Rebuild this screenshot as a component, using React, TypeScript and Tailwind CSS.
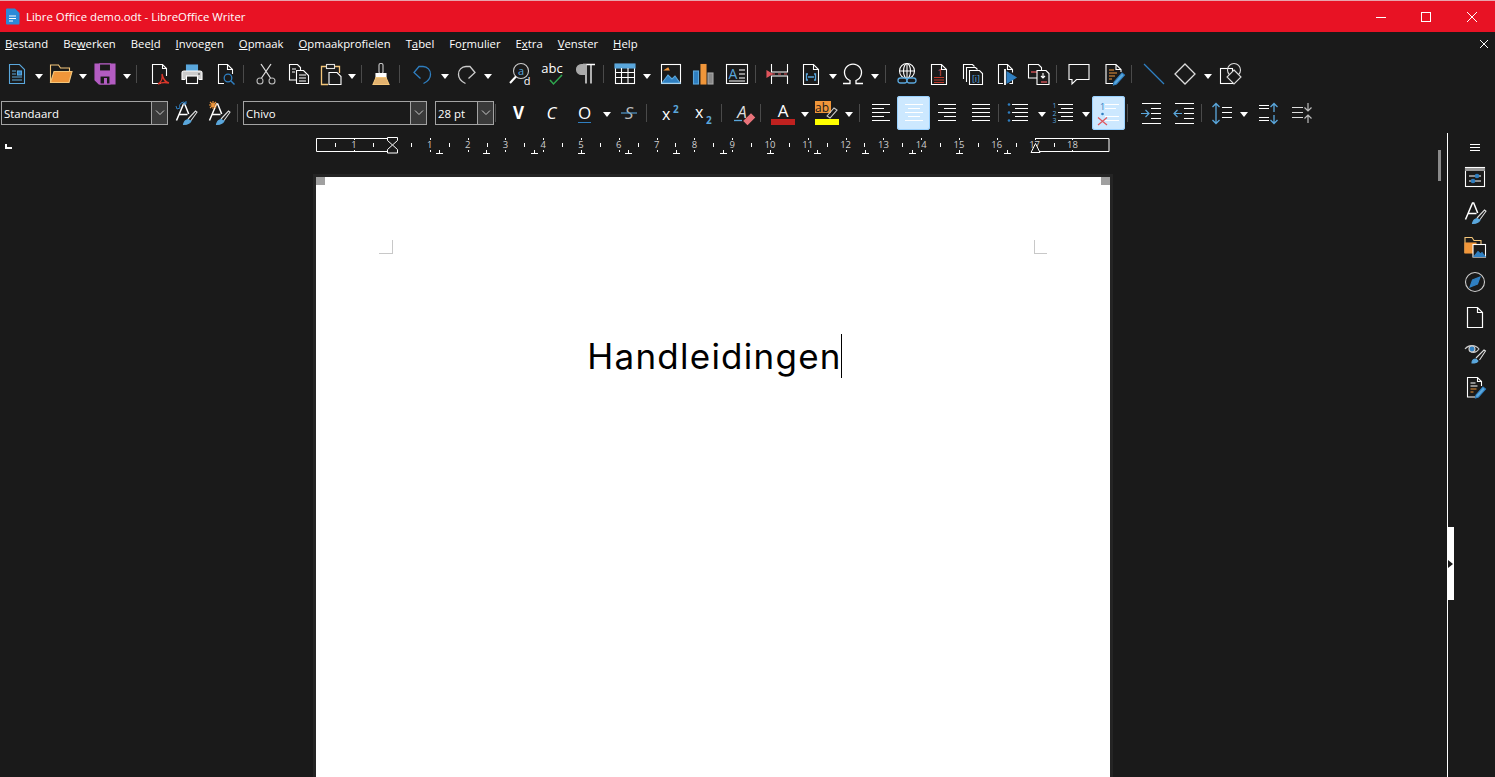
import type { ReactNode } from 'react'

const BLUE = '#2f7fc1'
const LBLUE = '#5aa7dc'
const ORANGE = '#f0963a'
const GRAY = '#b8b8b8'

function Ico({ children }: { children: ReactNode }) {
  return (
    <svg width="24" height="24" viewBox="0 0 24 24" fill="none" stroke="#fff" strokeWidth="1.1" className="overflow-visible">
      {children}
    </svg>
  )
}

// toolbar slot, 33px wide
function B({ children, on, className = '' }: { children: ReactNode; on?: boolean; className?: string }) {
  return (
    <div
      className={`flex h-[34px] w-[33px] shrink-0 items-center justify-center rounded-[3px] ${
        on ? 'bg-[#cce8ff] shadow-[inset_0_0_0_1px_#99d1ff]' : ''
      } ${className}`}
    >
      {children}
    </div>
  )
}

function D({ className = '' }: { className?: string }) {
  return (
    <div className={`flex h-[34px] w-[11px] shrink-0 items-center justify-center pt-1 ${className}`}>
      <div className="h-0 w-0 border-x-[4px] border-t-[5px] border-x-transparent border-t-white" />
    </div>
  )
}

function S({ className = '' }: { className?: string }) {
  return (
    <div className={`flex h-[34px] w-[8px] shrink-0 items-center pl-[2px] ${className}`}>
      <div className="h-[18px] w-px bg-[#4a4a4a]" />
    </div>
  )
}

function Combo({ text, className }: { text: string; className: string }) {
  return (
    <div className={`flex h-[24px] shrink-0 items-stretch border border-[#a3a3a3] bg-[#1a1a1a] ${className}`}>
      <span className="flex-1 truncate pl-[2px] text-[11.4px] leading-[24px] text-white">{text}</span>
      <div className="flex w-[16px] items-center justify-center border-l border-[#a3a3a3] bg-[#3a3a3a]">
        <svg width="10" height="6" viewBox="0 0 10 6" fill="none" stroke="#c8c8c8">
          <path d="M1 .5l4 4 4-4" />
        </svg>
      </div>
    </div>
  )
}

const menu: [string, string, string][] = [
  ['', 'B', 'estand'],
  ['Be', 'w', 'erken'],
  ['Bee', 'l', 'd'],
  ['', 'I', 'nvoegen'],
  ['', 'O', 'pmaak'],
  ['', 'O', 'pmaakprofielen'],
  ['T', 'a', 'bel'],
  ['Fo', 'r', 'mulier'],
  ['E', 'x', 'tra'],
  ['', 'V', 'enster'],
  ['', 'H', 'elp'],
]

function StyleA() {
  return (
    <>
      <path d="M2.500 19.500L9.500 3h1.200l4 10M5.500 13.500h8" strokeWidth="1.500" />
      <path d="M14 18l7.500-8 1.500 1.200-6 8.300" stroke="#ddd" />
      <path d="M9.500 23.500c.5-3 2-4.500 4.500-5l3 1.500c-1.500 3-4 3.500-7.500 3.500z" fill={LBLUE} stroke={LBLUE} />
    </>
  )
}

function Ruler() {
  const step = 37.8
  const nums = Array.from({ length: 19 }, (_, i) => i)
  const tabs = Array.from({ length: 13 }, (_, i) => 439 + i * 47.3)
  return (
    <svg width="800" height="22" viewBox="314 133 800 22" fill="none" stroke="#fff" className="shrink-0">
      <path d="M392 138.500H316.500v13H392M1035 138.500h74v13H1035" />
      {nums.map((n) => {
        const x = 392 + n * step
        return (
          <g key={n}>
            {n > 0 && (
              <text x={x} y={147.5} textAnchor="middle" fontSize="9.5" fill="#cfcfcf" stroke="none" fontFamily="'Open Sans', sans-serif">
                {n}
              </text>
            )}
            <path d={`M${Math.round(x) + 0.5} 138v2M${Math.round(x) + 0.5} 150v2`} />
            {n < 18 && <path d={`M${Math.round(x + step / 2) + 0.5} 143v4`} />}
          </g>
        )
      })}
      <text x={354} y={147.5} textAnchor="middle" fontSize="9.5" fill="#cfcfcf" stroke="none" fontFamily="'Open Sans', sans-serif">
        1
      </text>
      <path d="M354.500 138v2M354.500 150v2M335.500 143v4M373.500 143v4" />
      {tabs.map((x) => (
        <path key={x} d={`M${Math.round(x) + 0.5} 150v3M${Math.round(x) - 3} 153.500h7`} />
      ))}
      <path d="M387.500 137.500h10v3l-5 4.500-5-4.500zM392.500 145l5 4.500v3.500h-10v-3.500z" fill="#1a1a1a" />
      <path d="M1031 152.500l4.500-9 4.500 9z" fill="#1a1a1a" />
    </svg>
  )
}

const sideIcons: ReactNode[] = [
  <>
    <rect x="2.500" y="2.500" width="19" height="19" />
    <path d="M2 4.500h20" stroke="#999" strokeWidth="3" />
    <path d="M6 11h12M6 16h12" />
    <circle cx="14" cy="11" r="1.700" fill={BLUE} stroke={BLUE} />
    <circle cx="10" cy="16" r="1.700" fill={BLUE} stroke={BLUE} />
  </>,
  <StyleA />,
  <>
    <path d="M2 18V2.500h7l2 3h7V9" stroke="#f4c67a" />
    <rect x="2" y="8" width="11" height="10" fill={ORANGE} stroke={ORANGE} />
    <rect x="10" y="9.500" width="12.500" height="12.500" fill="#1a1a1a" stroke="#fff" />
    <path d="M11 21.500l4-5 2.500 2.500 1.500-1.500 3 4z" fill={BLUE} stroke={BLUE} />
  </>,
  <>
    <circle cx="12" cy="12" r="9.500" stroke="#ccc" />
    <path d="M17 7l-2.500 7L7 17l2.500-7z" fill={BLUE} stroke={BLUE} />
  </>,
  <path d="M4.500 2.500h10l5 5v15h-15zM14.500 2.500v5h5" strokeWidth="1.200" />,
  <>
    <path d="M2 9c3-4 10-5 14 0-2 3-5 4-8 3" stroke="#ccc" />
    <circle cx="9" cy="9" r="3" fill={BLUE} stroke="#ccc" />
    <path d="M13 18l8-8 1.500 1-6 9" stroke="#ddd" />
    <path d="M9 23c0-3 2-4 4-4l2 2c-1 2-3 2-6 2z" fill={LBLUE} stroke={LBLUE} />
  </>,
  <>
    <path d="M12 22H4.500V2.500h10l4 4V11M14.500 2.500v4h4" />
    <path d="M7.500 8h5M7.500 11h7" stroke="#fff" />
    <path d="M7.500 14h6M7.500 17h3" stroke={ORANGE} />
    <path d="M13 20l7-8 2.500 2-7 8-3 1z" fill={LBLUE} stroke={BLUE} />
  </>,
]

export default function App() {
  return (
    <div className="flex h-[777px] w-[1495px] flex-col overflow-hidden bg-[#1a1a1a] font-['Open_Sans',sans-serif] text-white">
      {/* title bar */}
      <div className="flex h-[32px] shrink-0 items-center border-t border-[#e7a4ac] bg-[#e81224] pl-[5px]">
        <svg width="15" height="17" viewBox="0 0 15 17">
          <path d="M1 1.500A1 1 0 012 .5h8l4.500 4.500v10.500a1 1 0 01-1 1H2a1 1 0 01-1-1z" fill="#2b8ad8" />
          <path d="M4 8h7M4 10.500h7M4 13h4" stroke="#fff" />
        </svg>
        <span className="ml-[6px] text-[11.4px] text-white">Libre Office demo.odt - LibreOffice Writer</span>
        <div className="ml-auto flex items-center">
          <div className="flex w-[45px] justify-center">
            <svg width="12" height="12" stroke="#fff"><path d="M1 6.500h10" /></svg>
          </div>
          <div className="flex w-[46px] justify-center">
            <svg width="12" height="12" fill="none" stroke="#fff"><rect x="1.500" y="1.500" width="9" height="9" /></svg>
          </div>
          <div className="flex w-[46px] justify-center">
            <svg width="12" height="12" stroke="#fff"><path d="M1 1l10 10M11 1L1 11" /></svg>
          </div>
        </div>
      </div>

      {/* menu bar */}
      <div className="flex h-[24px] shrink-0 items-center gap-[15px] pl-[5px] pr-[6px] text-[11.3px]">
        {menu.map(([a, u, b]) => (
          <span key={a + u + b}>
            {a}
            <span className="underline">{u}</span>
            {b}
          </span>
        ))}
        <svg className="ml-auto" width="10" height="10" stroke="#fff"><path d="M1 1l8 8M9 1L1 9" /></svg>
      </div>

      {/* standard toolbar */}
      <div className="flex h-[36px] shrink-0 items-center">
        <B>
          <Ico>
            <path d="M4.500 2.500h10l5 5v14h-15z" stroke={LBLUE} />
            <path d="M7 9h4M7 12h4M7 15h10M7 18h10" stroke={LBLUE} />
            <rect x="12.500" y="9" width="4" height="4" fill={BLUE} stroke={LBLUE} />
          </Ico>
        </B>
        <D />
        <B>
          <Ico>
            <path d="M1.500 20V3h8l2 3h9v4" stroke="#f4c67a" />
            <path d="M1.500 20.500L5 9.500h18l-3 11z" fill={ORANGE} stroke="#f4c67a" />
          </Ico>
        </B>
        <D />
        <B>
          <Ico>
            <path d="M2 2h20v20H6l-4-4z" fill="#b35cc2" stroke="#b35cc2" />
            <rect x="6.500" y="2" width="11" height="7" fill="#1a1a1a" stroke="#b35cc2" />
            <rect x="7" y="14" width="10" height="8" fill="#1a1a1a" stroke="#b35cc2" />
            <rect x="11" y="16" width="3" height="6" fill="#b35cc2" stroke="none" />
          </Ico>
        </B>
        <D />
        <S className="ml-[2px]" />
        <B>
          <Ico>
            <path d="M14 21.500H5.500v-19h10l4 4V14M15.500 2.500v4h4" />
            <path d="M15 12c1 5-1 8-4 10 4-2 7-2 11-1-4-1-6-4-7-9z" stroke="#d8362a" strokeWidth="1.400" />
          </Ico>
        </B>
        <B>
          <Ico>
            <rect x="6.500" y="3" width="11" height="6" fill={LBLUE} stroke={LBLUE} />
            <path d="M5 17.500H2V11a2 2 0 012-2h16a2 2 0 012 2v6.500h-3" fill="#ccc" stroke="#fff" />
            <rect x="6.500" y="14" width="11" height="7.500" fill="#1a1a1a" />
            <path d="M18 12h2" stroke="#333" />
          </Ico>
        </B>
        <B>
          <Ico>
            <path d="M11 21.500H5.500v-19h9l5 5V12M14.500 2.500v5h5" />
            <circle cx="15" cy="16" r="3.800" stroke={BLUE} strokeWidth="1.300" />
            <path d="M18 19l3.500 3.500" stroke={BLUE} strokeWidth="1.400" />
          </Ico>
        </B>
        <S />
        <B>
          <Ico>
            <path d="M7 2l9.500 14M17 2L7.500 16" stroke="#ddd" strokeWidth="1.300" />
            <circle cx="6" cy="19" r="3" stroke={GRAY} />
            <circle cx="18" cy="19" r="3" stroke={GRAY} />
          </Ico>
        </B>
        <B>
          <Ico>
            <path d="M9 18H2.500V2.500h8l3 3V8" />
            <path d="M5 7h4M5 10h3" />
            <path d="M9.500 8.500h7l5 5v8h-12z" fill="#1a1a1a" />
            <path d="M12 13h7M12 16h7M12 19h7" />
          </Ico>
        </B>
        <B className="-ml-[1px]">
          <Ico>
            <path d="M7 4.500H2.500v18H9" stroke="#f4c67a" strokeWidth="1.300" />
            <path d="M16 4.500h4.500V11" stroke="#f4c67a" strokeWidth="1.300" />
            <rect x="7.500" y="2.500" width="8" height="4" stroke="#ddd" />
            <path d="M10 10.500h8l4 4v8H10z" fill="#1a1a1a" />
          </Ico>
        </B>
        <D className="-ml-[1px]" />
        <S className="ml-[2px]" />
        <B className="-ml-[3px]">
          <Ico>
            <rect x="10" y="1.500" width="4" height="10" rx="1.500" fill="#1a1a1a" stroke="#ccc" />
            <path d="M7 11.500h10v4H7z" fill="#fff" />
            <path d="M7 15.500L4 22.500h16l-3-7z" fill="#e3b26e" stroke="#f4c67a" />
          </Ico>
        </B>
        <S />
        <B className="ml-[1px]">
          <Ico>
            <path d="M9.500 16.500L3 10.500l5-6h4a7.500 7.500 0 017.500 8c0 4-3 7-7 9" stroke={BLUE} strokeWidth="1.300" />
          </Ico>
        </B>
        <D />
        <B className="-ml-[1px]">
          <Ico>
            <path d="M14.500 16.500l6.500-6-5-6h-4a7.500 7.500 0 00-7.500 8c0 4 3 7 7 9" stroke="#ccc" strokeWidth="1.300" />
          </Ico>
        </B>
        <D />
        <B className="ml-[10px]">
          <Ico>
            <circle cx="13" cy="9" r="7.500" stroke="#ccc" />
            <path d="M8 14.500L2 21" strokeWidth="2" />
            <text x="13" y="13" textAnchor="middle" fontSize="11" fill={LBLUE} stroke="none">a</text>
            <text x="19" y="23" textAnchor="middle" fontSize="11" fill="#fff" stroke="none">d</text>
          </Ico>
        </B>
        <B className="-ml-[1px]">
          <Ico>
            <text x="12" y="11" textAnchor="middle" fontSize="13" fill="#fff" stroke="none">abc</text>
            <path d="M10 18l3.500 4L22 13" stroke="#2fa84f" strokeWidth="1.500" />
          </Ico>
        </B>
        <B>
          <Ico>
            <path d="M13 2.500v19M18 2.500v19M10 2.500h12" strokeWidth="1.300" />
            <path d="M13 2.500H8.500a4.500 4.500 0 000 10H13z" fill="#aaa" stroke="#aaa" />
          </Ico>
        </B>
        <S />
        <B className="-ml-[1px]">
          <Ico>
            <rect x="2.500" y="2.500" width="19" height="19" />
            <rect x="2" y="2" width="20" height="4" fill={LBLUE} stroke={LBLUE} />
            <path d="M2.500 10.500h19M2.500 15.500h19M8.500 6v15.500M15 6v15.500" />
          </Ico>
        </B>
        <D />
        <B className="ml-[2px]">
          <Ico>
            <rect x="2.500" y="2.500" width="19" height="19" />
            <path d="M3 21l6-8 4 4 3-3 5 7z" fill={BLUE} stroke={LBLUE} />
            <path d="M6 8l3-2 1 2z" fill={ORANGE} stroke={ORANGE} />
          </Ico>
        </B>
        <B className="-ml-[1px]">
          <Ico>
            <rect x="2.500" y="9" width="5" height="13" fill={BLUE} stroke={LBLUE} />
            <rect x="10" y="2.500" width="5" height="19.500" fill={ORANGE} stroke={ORANGE} />
            <rect x="17" y="11" width="5" height="11" fill="#888" stroke="#aaa" />
          </Ico>
        </B>
        <B className="ml-[1px]">
          <Ico>
            <rect x="1.500" y="2.500" width="21" height="19" />
            <text x="8" y="17" textAnchor="middle" fontSize="14" fill={LBLUE} stroke="none">A</text>
            <path d="M14 8h6M14 12h6M14 16h6M4 19h16" />
          </Ico>
        </B>
        <S />
        <B>
          <Ico>
            <path d="M5.500 2v8h16V2M5.500 22v-8h16v8" />
            <path d="M6 12h3M12 12h3M18 12h3" stroke="#e0555c" />
            <path d="M1 9l5 3-5 3z" fill="#e0555c" stroke="#e0555c" />
          </Ico>
        </B>
        <B>
          <Ico>
            <path d="M4.500 2.500h10l5 5v15h-15zM14.500 2.500v5h5" />
            <path d="M9 12H7.500v6H9M15 12h1.500v6H15M9 15h6" stroke={LBLUE} strokeWidth="1.300" />
          </Ico>
        </B>
        <D />
        <B className="-ml-[2px]">
          <Ico>
            <path d="M2 21.500h7v-3a8.500 8.500 0 116 0v3h7" strokeWidth="1.300" />
          </Ico>
        </B>
        <D />
        <S className="ml-[3px]" />
        <B className="-ml-[1px]">
          <Ico>
            <circle cx="12" cy="9" r="7.500" />
            <ellipse cx="12" cy="9" rx="3.500" ry="7.500" />
            <path d="M4.500 9h15M12 1.500v15" />
            <rect x="3" y="16" width="9" height="5" rx="2.500" fill="#1a1a1a" stroke={LBLUE} strokeWidth="1.300" />
            <rect x="12" y="16" width="9" height="5" rx="2.500" fill="#1a1a1a" stroke={LBLUE} strokeWidth="1.300" />
          </Ico>
        </B>
        <B className="-ml-[1px]">
          <Ico>
            <path d="M4.500 2.500h10l5 5v15h-15zM14.500 2.500v5h5" />
            <text x="13" y="14" textAnchor="middle" fontSize="9" fill="#e0555c" stroke="none">1</text>
            <path d="M7 15.500h10M7 18h10M7 20.500h10" stroke="#c0392b" />
          </Ico>
        </B>
        <B className="ml-[1px]">
          <Ico>
            <path d="M2.500 17V2.500h9l2 2M5.500 20V5.500h9l2 2" />
            <path d="M8.500 22.500v-14h10l3 3v11z" />
            <text x="15" y="20" textAnchor="middle" fontSize="9" fill={LBLUE} stroke="none">[i]</text>
          </Ico>
        </B>
        <B>
          <Ico>
            <path d="M9 21.500H4.500v-19h9l5 5v3M13.500 2.500v5h5M18.500 18v3.500h-3" />
            <path d="M11 7v16" strokeWidth="1.800" />
            <path d="M13 10l9 5.500-9 5.500z" fill={BLUE} stroke={BLUE} />
          </Ico>
        </B>
        <B>
          <Ico>
            <path d="M11 16H1.500V2.500h10l3 3V8" />
            <path d="M4 10h6" stroke="#e0555c" strokeWidth="1.300" />
            <path d="M10 8.500h9l3 3v11H10z" fill="#1a1a1a" />
            <path d="M14 20h6" stroke="#e0555c" strokeWidth="1.300" />
            <path d="M16 11v5M14 14l2 2 2-2" />
          </Ico>
        </B>
        <S className="-ml-[1px]" />
        <B>
          <Ico>
            <path d="M2 2.500h20v15H9.500L5 22v-4.500H2z" />
          </Ico>
        </B>
        <B className="ml-[2px]">
          <Ico>
            <path d="M11 21.500H4V2.500h10l5 5V10M14 2.500v5h5" />
            <path d="M7 8h5M7 11h8M7 14h6M7 17h3" stroke={ORANGE} />
            <path d="M12 20l8-9 2.500 2-8 9-3 1z" fill={LBLUE} stroke={BLUE} />
          </Ico>
        </B>
        <S className="-ml-[1px]" />
        <B>
          <Ico>
            <path d="M2 2l20 20" stroke={BLUE} strokeWidth="1.300" />
          </Ico>
        </B>
        <B className="-ml-[2px]">
          <Ico>
            <path d="M12 2l10 10-10 10L2 12z" stroke="#ddd" strokeWidth="1.300" />
          </Ico>
        </B>
        <D className="ml-[1px]" />
        <B className="ml-[1px]">
          <Ico>
            <rect x="1.500" y="6.500" width="12" height="15" />
            <circle cx="15" cy="8" r="6.500" stroke="#ddd" />
            <path d="M15 8l7 7-7 7-7-7z" fill="#1a1a1a" stroke="#ddd" />
          </Ico>
        </B>
      </div>

      {/* formatting toolbar */}
      <div className="flex h-[41px] shrink-0 items-center pl-[1px]">
        <Combo text="Standaard" className="w-[167px]" />
        <B className="ml-[1px]">
          <Ico>
            <StyleA />
            <path d="M7 8a4 4 0 016-5M13 1v3h-3M3 6l1 3 3-1" stroke={BLUE} strokeWidth="1" transform="translate(-1 -1)" />
          </Ico>
        </B>
        <B>
          <Ico>
            <StyleA />
            <path d="M6 0v8M2 4h8M3 1l6 6M9 1L3 7" stroke={ORANGE} />
          </Ico>
        </B>
        <S />
        <Combo text="Chivo" className="w-[184px]" />
        <Combo text="28 pt" className="ml-[8px] w-[59px]" />
        <S className="-ml-[1px]" />
        <B className="ml-[1px]">
          <span className="text-[17px] font-bold leading-none">V</span>
        </B>
        <B>
          <span className="text-[17px] italic leading-none">C</span>
        </B>
        <B>
          <span className="border-b-[1.500px] border-[#2f7fc1] text-[17px] leading-[19px]">O</span>
        </B>
        <D />
        <B>
          <Ico>
            <text x="12" y="18" textAnchor="middle" fontSize="17" fontStyle="italic" fill="#bbb" stroke="none">S</text>
            <path d="M4 12h16" stroke={LBLUE} />
          </Ico>
        </B>
        <S className="-ml-[1px]" />
        <B className="ml-[3px]">
          <Ico>
            <text x="2" y="19" fontSize="16" fill="#fff" stroke="none">x</text>
            <text x="13" y="12" fontSize="10" fontWeight="700" fill={LBLUE} stroke="none">2</text>
          </Ico>
        </B>
        <B>
          <Ico>
            <text x="2" y="17" fontSize="16" fill="#fff" stroke="none">x</text>
            <text x="13" y="23" fontSize="10" fontWeight="700" fill={LBLUE} stroke="none">2</text>
          </Ico>
        </B>
        <S className="-ml-[2px]" />
        <B>
          <Ico>
            <text x="10" y="17" textAnchor="middle" fontSize="17" fontStyle="italic" fill="#ddd" stroke="none">A</text>
            <path d="M2 19.500h8" stroke={LBLUE} strokeWidth="1.300" />
            <path d="M12 20l7-7 3.500 3.500-7 7z" fill="#e8737a" stroke="#e8737a" />
          </Ico>
        </B>
        <S className="-ml-[2px]" />
        <B>
          <Ico>
            <text x="12" y="16" textAnchor="middle" fontSize="17" fill="#fff" stroke="none">A</text>
            <rect x="0" y="18" width="24" height="6" fill="#c0211f" stroke="none" />
          </Ico>
        </B>
        <D />
        <B>
          <Ico>
            <rect x="0" y="0" width="16" height="12" fill={ORANGE} stroke="none" />
            <text x="7" y="11" textAnchor="middle" fontSize="12" fill="#1a1a1a" stroke="none">ab</text>
            <path d="M12 15l7-8 3 2-7 8z" stroke="#ccc" />
            <rect x="0" y="18" width="24" height="6" fill="#ffff00" stroke="none" />
          </Ico>
        </B>
        <D />
        <S className="ml-[3px]" />
        <B className="-ml-[1px]">
          <Ico>
            <path d="M3 3.500h18M3 7.500h12M3 11.500h18M3 15.500h12M3 19.500h18" />
          </Ico>
        </B>
        <B on>
          <Ico>
            <path d="M3 3.500h18M6 7.500h12M3 11.500h18M6 15.500h12M3 19.500h18" />
          </Ico>
        </B>
        <B>
          <Ico>
            <path d="M3 3.500h18M9 7.500h12M3 11.500h18M9 15.500h12M3 19.500h18" />
          </Ico>
        </B>
        <B className="ml-[1px]">
          <Ico>
            <path d="M3 3.500h18M3 7.500h18M3 11.500h18M3 15.500h18M3 19.500h18" />
          </Ico>
        </B>
        <S className="-ml-[1px]" />
        <B className="-ml-[3px]">
          <Ico>
            <path d="M6 3.500h16M9 7.500h13M6 11.500h16M9 15.500h13M6 19.500h16" />
            <circle cx="3" cy="3.500" r="1.300" fill={BLUE} stroke="none" />
            <circle cx="3" cy="11.500" r="1.300" fill={BLUE} stroke="none" />
            <circle cx="3" cy="19.500" r="1.300" fill={BLUE} stroke="none" />
          </Ico>
        </B>
        <D className="ml-[2px]" />
        <B className="-ml-[1px]">
          <Ico>
            <path d="M7 3.500h15M10 7.500h12M7 11.500h15M10 15.500h12M7 19.500h15" />
            <text x="1.500" y="7" fontSize="7" fill={LBLUE} stroke="none">1</text>
            <text x="1.500" y="14.500" fontSize="7" fill={LBLUE} stroke="none">2</text>
            <text x="1.500" y="22" fontSize="7" fill={LBLUE} stroke="none">3</text>
          </Ico>
        </B>
        <D className="ml-[1px]" />
        <B on className="ml-[1px]">
          <Ico>
            <path d="M8 3.500h14M8 7.500h11M8 15.500h14M8 19.500h14" />
            <text x="3" y="9" fontSize="9" fill={BLUE} stroke="none">1</text>
            <circle cx="5.500" cy="13" r="1.300" fill={BLUE} stroke="none" />
            <path d="M1 16.500l9 7.500M10 16.500L1 24" stroke="#e0555c" strokeWidth="1.200" />
          </Ico>
        </B>
        <S />
        <B className="ml-[1px]">
          <Ico>
            <path d="M3 2.500h19M12 7.500h10M12 12.500h10M12 17.500h10M3 22.500h19" />
            <path d="M2 12.500h8M6.500 9l3.500 3.500L6.500 16" stroke={LBLUE} strokeWidth="1.200" />
          </Ico>
        </B>
        <B>
          <Ico>
            <path d="M3 2.500h19M12 7.500h10M12 12.500h10M12 17.500h10M3 22.500h19" />
            <path d="M10 12.500H2M5.500 9L2 12.500 5.500 16" stroke={LBLUE} strokeWidth="1.200" />
          </Ico>
        </B>
        <S className="-ml-[1px]" />
        <B className="-ml-[2px]">
          <Ico>
            <path d="M12 6.500h10M12 11.500h10M12 16.500h10" />
            <path d="M6 3v19M2.500 6L6 2.500 9.500 6M2.500 19L6 22.500 9.500 19" stroke={LBLUE} strokeWidth="1.300" />
          </Ico>
        </B>
        <D />
        <B className="ml-[3px]">
          <Ico>
            <path d="M2 4.500h10M2 7.500h10M2 16.500h10M2 19.500h10" />
            <path d="M17 11V3M13.500 6L17 2.500 20.500 6M17 14v8M13.500 19l3.500 3.500 3.500-3.500" stroke={LBLUE} strokeWidth="1.300" />
          </Ico>
        </B>
        <B>
          <Ico>
            <path d="M2 6.500h11M2 11.500h11M2 16.500h11" stroke="#ddd" />
            <path d="M18 2v8M14.500 6.500L18 10l3.500-3.500M18 22v-8M14.500 17.500L18 14l3.500 3.500" stroke="#bbb" strokeWidth="1.200" />
          </Ico>
        </B>
      </div>

      {/* workspace */}
      <div className="relative flex min-h-0 flex-1">
        <div className="flex min-w-0 flex-1 flex-col">
          <div className="flex h-[44px] shrink-0 items-start pl-[5px]">
            <div className="mt-[11px] h-[5px] w-[7px] border-b-2 border-l-2 border-white" />
            <div className="ml-[302px]">
              <Ruler />
            </div>
          </div>
          <div className="ml-[316px] flex w-[794px] flex-1 flex-col bg-white shadow-[0_0_0_3px_#242424]">
            <div className="flex justify-between">
              <div className="h-[8px] w-[9px] bg-[#a0a0a0]" />
              <div className="h-[8px] w-[9px] bg-[#a0a0a0]" />
            </div>
            <div className="flex justify-between px-[63px] pt-[55px]">
              <div className="h-[14px] w-[14px] border-b border-r border-[#c8c8c8]" />
              <div className="h-[14px] w-[13px] border-b border-l border-[#c8c8c8]" />
            </div>
            <div className="mt-[80px] flex justify-center pl-[3px]">
              <div className="flex h-[44px] items-center border-r border-black">
                <span className="-mr-[1px] font-['Inter',sans-serif] text-[35px] leading-none tracking-[1.250px] text-black">
                  Handleidingen
                </span>
              </div>
            </div>
          </div>
        </div>

        {/* scrollbar over the window background */}
        <div className="absolute left-[1438px] top-[17px] h-[31px] w-[3px] bg-[#8a8a8a]" />

        {/* sidebar */}
        <div className="flex w-[48px] shrink-0 flex-col items-center border-l border-white pl-[6px]">
          <svg className="mt-[10px]" width="12" height="10" stroke="#fff">
            <path d="M1 1.500h10M1 4.500h10M1 7.500h10" />
          </svg>
          <div className="mt-[12px] flex flex-col gap-[11px]">
            {sideIcons.map((icon, i) => (
              <Ico key={i}>{icon}</Ico>
            ))}
          </div>
        </div>

        {/* sidebar handle */}
        <div className="absolute left-[1447px] top-[394px] flex h-[73px] w-[7px] items-center bg-white">
          <div className="ml-px h-0 w-0 border-y-[4px] border-l-[5px] border-y-transparent border-l-[#1a1a1a]" />
        </div>
      </div>
    </div>
  )
}
